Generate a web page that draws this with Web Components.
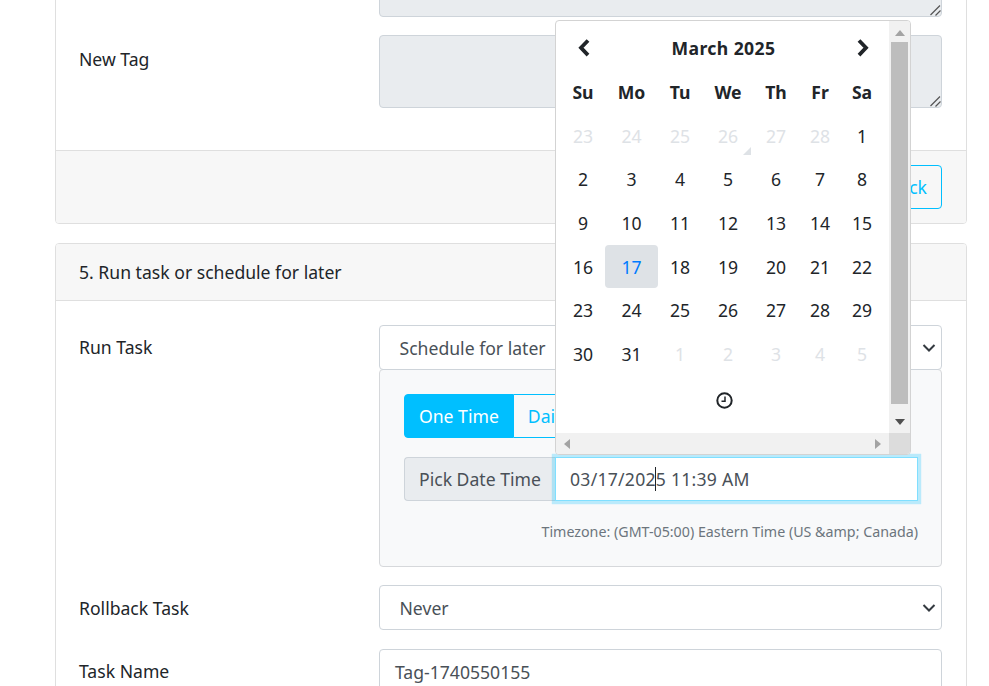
<!DOCTYPE html>
<html>
<head>
<meta charset="utf-8">
<title>Schedule task</title>
<style>
html, body { margin: 0; padding: 0; height: 686px; overflow: hidden; background: #fff; }
body { font-family: "Noto Sans", "Open Sans", sans-serif; font-size: 17.6px; line-height: 26px; color: #212529; }
</style>
</head>
<body>
<task-page></task-page>

<script>
const BASE = `
    :host, * { box-sizing: border-box; }
`;

class taskCard extends HTMLElement {
    constructor() {
        super();
        const shadow = this.attachShadow({ mode: "open" });
        shadow.innerHTML = `
        <style>
        ${BASE}
        :host { display: block; background: #fff; border: 1px solid #dfdfdf; border-radius: 4px; }
        .head { background: #f7f7f7; border-bottom: 1px solid #dfdfdf; padding: 15px 23px; height: 57px; border-radius: 3px 3px 0 0; }
        .body { padding: 24px 23px 0; }
        :host([nohead]) .head { display: none; }
        ::slotted([slot=footer]) { display: flex; justify-content: flex-end; background: #f7f7f7; border-top: 1px solid #dfdfdf; padding: 14px 24px; height: 73px; border-radius: 0 0 3px 3px; }
        </style>
        <div class="head"><slot name="head"></slot></div>
        <div class="body"><slot></slot></div>
        <slot name="footer"></slot>
        `;
    }
}

class formRow extends HTMLElement {
    constructor() {
        super();
        const shadow = this.attachShadow({ mode: "open" });
        shadow.innerHTML = `
        <style>
        ${BASE}
        :host { display: grid; grid-template-columns: 300px 563px; margin-bottom: 19px; }
        .label { padding-top: var(--label-top, 9px); }
        </style>
        <div class="label">${this.getAttribute("label")}</div>
        <div><slot></slot></div>
        `;
    }
}

class formField extends HTMLElement {
    constructor() {
        super();
        const shadow = this.attachShadow({ mode: "open" });
        const type = this.getAttribute("type");
        const chevron = type == "select" ? `
            <svg width="14" height="14" viewBox="0 0 14 14"><path d="M1.500 4l5.500 5.500 5.500-5.500" fill="none" stroke="#343a40" stroke-width="2"/></svg>` : "";
        const grip = type == "area" ? `
            <svg class="grip" width="12" height="12" viewBox="0 0 12 12"><path d="M1.500 11L11 1.500M6.500 11.500L11.500 6.500" fill="none" stroke="#555" stroke-width="1.200"/></svg>` : "";
        shadow.innerHTML = `
        <style>
        ${BASE}
        :host { display: block; }
        .box { position: relative; display: flex; align-items: center; justify-content: space-between; height: 45px; padding: 0 5px 0 19.500px; background: #fff; border: 1px solid #ced4da; border-radius: 4px; color: #495057; }
        :host([type=input]) .box { padding-left: 15px; }
        :host([type=area]) .box { background: #e9ecef; height: 73px; align-items: flex-start; }
        .grip { position: absolute; right: 0; bottom: 0; }
        </style>
        <div class="box"><span><slot></slot></span>${chevron}${grip}</div>
        `;
    }
}

class toggleGroup extends HTMLElement {
    constructor() {
        super();
        const shadow = this.attachShadow({ mode: "open" });
        shadow.innerHTML = `
        <style>
        ${BASE}
        :host { display: flex; height: 44px; }
        div { display: flex; align-items: center; padding: 0 14px; border: 1px solid #00bfff; color: #00bfff; }
        .on { background: #00bfff; color: #fff; border-radius: 4px 0 0 4px; }
        .off { border-left: 0; }
        .last { border-left: 0; border-radius: 0 4px 4px 0; }
        </style>
        <div class="on">One Time</div><div class="off">Daily</div><div class="last">Weekly</div>
        `;
    }
}

class dateField extends HTMLElement {
    constructor() {
        super();
        const shadow = this.attachShadow({ mode: "open" });
        shadow.innerHTML = `
        <style>
        ${BASE}
        :host { display: flex; height: 44px; }
        .addon { display: flex; align-items: center; width: 151px; padding: 0 14px; flex: none; background: #e9ecef; border: 1px solid #ced4da; border-right: 0; border-radius: 4px 0 0 4px; color: #495057; white-space: nowrap; }
        .input { position: relative; flex: 1; display: flex; align-items: center; padding: 0 14px; background: #fff; border: 1px solid #80dfff; box-shadow: 0 0 0 3.200px rgba(0,191,255,.25); color: #495057; letter-spacing: .25px; }
        .caret { position: absolute; left: 99px; top: 9px; width: 1px; height: 24px; background: #212529; }
        </style>
        <div class="addon">Pick Date Time</div>
        <div class="input">03/17/2025 11:39 AM<i class="caret"></i></div>
        `;
    }
}

class datePicker extends HTMLElement {
    constructor() {
        super();
        const shadow = this.attachShadow({ mode: "open" });
        const days = [];
        for (const d of [23, 24, 25, 26, 27, 28]) days.push(`<div class="cell old">${d}</div>`);
        for (let d = 1; d <= 31; d++) days.push(`<div class="cell${d == 17 ? " active" : ""}">${d}</div>`);
        for (let d = 1; d <= 5; d++) days.push(`<div class="cell old">${d}</div>`);
        const heads = ["Su", "Mo", "Tu", "We", "Th", "Fr", "Sa"].map(d => `<div class="cell dow">${d}</div>`).join("");
        shadow.innerHTML = `
        <style>
        ${BASE}
        :host { position: absolute; left: 555px; top: 20px; width: 356px; height: 435px; display: grid; grid-template-columns: 1fr 21px; grid-template-rows: 1fr 21px; background: #fff; border: 1px solid #d3d3d3; border-radius: 4px; font-size: 17.600px; overflow: hidden; color: #212529; }
        .content { padding: 5px 0 0 5px; min-width: 0; min-height: 0; }
        .nav { display: grid; grid-template-columns: 44px 237px 40px; height: 44px; align-items: center; width: 321px; }
        .nav svg { justify-self: center; }
        .title { font-weight: 700; text-align: center; letter-spacing: .4px; }
        .grid { display: grid; grid-template-columns: 44px 53px 44px 52px 44px 44px 40px; grid-template-rows: 44px; grid-auto-rows: 43.600px; }
        .cell { display: flex; align-items: center; justify-content: center; border-radius: 4px; }
        .dow { font-weight: 700; }
        .old { color: #dee2e6; position: relative; }
        .active { background: #dee2e6; color: #007bff; }
        .mark { position: absolute; right: 3px; bottom: 3px; width: 0; height: 0; border-left: 8px solid transparent; border-bottom: 8px solid #dee2e6; }
        .clock { display: flex; justify-content: center; margin-top: 16px; padding-left: 6px; width: 321px; }
        .vbar { background: #f1f1f1; display: flex; flex-direction: column; align-items: center; padding-top: 9px; min-height: 0; }
        .thumb { width: 17px; height: 362px; margin: 6px 0 15px; background: #bdbdbd; flex: none; }
        .hbar { background: #f1f1f1; display: flex; justify-content: space-between; align-items: center; padding: 0 8px; }
        .corner { background: #dcdcdc; }
        svg { display: block; flex: none; }
        </style>
        <div class="content">
            <div class="nav">
                <svg width="15" height="18" viewBox="0 0 15 18"><path d="M12 1.500L5 8.800l7 7.300" fill="none" stroke="#212529" stroke-width="3.800"/></svg>
                <div class="title">March 2025</div>
                <svg width="15" height="18" viewBox="0 0 15 18"><path d="M4 1.500l7 7.300-7 7.300" fill="none" stroke="#212529" stroke-width="3.800"/></svg>
            </div>
            <div class="grid">${heads}${days.join("")}</div>
            <div class="clock">
                <svg width="17" height="17" viewBox="0 0 17 17"><circle cx="8.500" cy="8.500" r="7.200" fill="none" stroke="#212529" stroke-width="2"/><path d="M9 4.500V9.200H5.500" fill="none" stroke="#212529" stroke-width="1.500"/></svg>
            </div>
        </div>
        <div class="vbar">
            <svg width="10" height="6" viewBox="0 0 10 6"><path d="M5 0l5 6H0z" fill="#a3a3a3"/></svg>
            <div class="thumb"></div>
            <svg width="10" height="6" viewBox="0 0 10 6"><path d="M0 0h10L5 6z" fill="#505050"/></svg>
        </div>
        <div class="hbar">
            <svg width="6" height="10" viewBox="0 0 6 10"><path d="M6 0v10L0 5z" fill="#a3a3a3"/></svg>
            <svg width="6" height="10" viewBox="0 0 6 10"><path d="M0 0v10l6-5z" fill="#a3a3a3"/></svg>
        </div>
        <div class="corner"></div>
        `;
        const cells = shadow.querySelectorAll(".old");
        const mark = document.createElement("i");
        mark.className = "mark";
        cells[3].appendChild(mark);
    }
}

class taskPage extends HTMLElement {
    constructor() {
        super();
        const shadow = this.attachShadow({ mode: "open" });
        shadow.innerHTML = `
        <style>
        ${BASE}
        :host { display: block; position: relative; height: 686px; overflow: hidden; padding-left: 55px; width: 989px; }
        .stack { width: 912px; margin-top: -81px; display: flex; flex-direction: column; gap: 19px; }
        .spacer { height: 42px; margin-top: -19px; }
        .back { height: 44px; padding: 0 14px; display: flex; align-items: center; border: 1px solid #00bfff; border-radius: 4px; color: #00bfff; }
        .panel { margin: -1px 0 18px; height: 198px; padding: 24px 23px 24px 24px; background: #f8f9fa; border: 1px solid #d6d8db; border-radius: 4px; }
        date-field { margin-top: 19px; }
        .zone { margin-top: 20px; text-align: right; font-size: 14.250px; line-height: 22px; color: #6c757d; }
        </style>
        <div class="stack">
            <task-card nohead>
                <form-row label="" style="margin-bottom: 18px"><form-field type="area"></form-field></form-row>
                <form-row label="New Tag" style="--label-top: 10.500px"><form-field type="area"></form-field></form-row>
                <div class="spacer"></div>
                <div slot="footer"><div class="back">Back</div></div>
            </task-card>
            <task-card>
                <div slot="head">5. Run task or schedule for later</div>
                <form-row label="Run Task" style="margin-bottom: 0"><form-field type="select">Schedule for later</form-field></form-row>
                <form-row label="" style="margin-bottom: 0">
                    <div class="panel">
                        <toggle-group></toggle-group>
                        <date-field></date-field>
                        <div class="zone">Timezone: (GMT-05:00) Eastern Time (US &amp;amp; Canada)</div>
                    </div>
                </form-row>
                <form-row label="Rollback Task" style="--label-top: 10px"><form-field type="select">Never</form-field></form-row>
                <form-row label="Task Name"><form-field type="input">Tag-1740550155</form-field></form-row>
            </task-card>
        </div>
        <date-picker></date-picker>
        `;
    }
}

customElements.define("task-card", taskCard);
customElements.define("form-row", formRow);
customElements.define("form-field", formField);
customElements.define("toggle-group", toggleGroup);
customElements.define("date-field", dateField);
customElements.define("date-picker", datePicker);
customElements.define("task-page", taskPage);
</script>
</body>
</html>
